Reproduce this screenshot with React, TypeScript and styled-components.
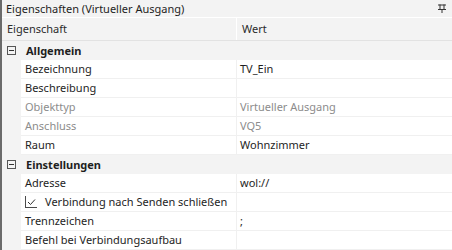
import React, { FC } from 'react';
import styled, { createGlobalStyle } from 'styled-components';

const GlobalStyle = createGlobalStyle`
  html, body {
    margin: 0;
    padding: 0;
    background: #f3f3f3;
  }
  body {
    font-family: "Noto Sans", "Open Sans", sans-serif;
    font-size: 11px;
    color: #1e1e1e;
  }
`;

const Panel = styled.div`
  width: 452px;
  height: 250px;
  overflow: hidden;
  background: #f3f3f3;
  border-left: 2px solid #6b6b6b;
  box-sizing: border-box;
  display: flex;
  flex-direction: column;
`;

const TitleBar = styled.div`
  height: 17px;
  flex: 0 0 17px;
  display: flex;
  align-items: center;
  justify-content: space-between;
  padding: 0 6px 0 4px;
  border-bottom: 1px solid #ffffff;
  line-height: 17px;
  color: #1e1e1e;
`;

const HeaderRow = styled.div`
  height: 22px;
  flex: 0 0 22px;
  display: grid;
  grid-template-columns: 234px 1fr;
  border-bottom: 1px solid #e2e2e2;
`;

const HeaderCell = styled.div<{ $first?: boolean }>`
  line-height: 22px;
  padding-left: 5px;
  border-left: ${p => (p.$first ? 'none' : '1px solid #ffffff')};
  color: #2b2b2b;
`;

const GroupRow = styled.div`
  height: 19px;
  flex: 0 0 19px;
  display: flex;
  align-items: center;
  font-weight: bold;
`;

const Expander = styled.span`
  width: 9px;
  height: 9px;
  box-sizing: border-box;
  border: 1px solid #555;
  margin: 0 10px 0 5px;
  position: relative;
  &::after {
    content: '';
    position: absolute;
    left: 1px;
    right: 1px;
    top: 3px;
    height: 1px;
    background: #333;
  }
`;

const Row = styled.div`
  height: 19px;
  flex: 0 0 19px;
  display: grid;
  grid-template-columns: 19px 215px 1fr;
`;

const Cell = styled.div<{ $disabled?: boolean; $value?: boolean }>`
  background: #ffffff;
  border-bottom: 1px solid #f0f0f0;
  border-left: ${p => (p.$value ? '1px solid #f0f0f0' : 'none')};
  box-sizing: border-box;
  line-height: 18px;
  padding-left: ${p => (p.$value ? '3px' : '4px')};
  color: ${p => (p.$disabled ? '#8c8c8c' : '#1e1e1e')};
  white-space: nowrap;
  overflow: hidden;
  display: flex;
  align-items: center;
`;

const CheckBox = styled.span`
  width: 12px;
  height: 12px;
  flex: 0 0 12px;
  box-sizing: border-box;
  border-left: 1px solid #4a4a4a;
  border-bottom: 1px solid #4a4a4a;
  margin: 0 8px 0 0;
  display: inline-flex;
  align-items: center;
  justify-content: center;
`;

const PinIcon: FC = () => (
  <svg width="8" height="10" viewBox="0 0 8 10">
    <rect x="0" y="0.5" width="8" height="1" fill="#333" />
    <rect x="1.5" y="0.5" width="1" height="5" fill="#333" />
    <rect x="5.5" y="0.5" width="1" height="5" fill="#333" />
    <rect x="0" y="5" width="8" height="1" fill="#333" />
    <rect x="3.5" y="5" width="1" height="4" fill="#333" />
  </svg>
);

interface Prop {
  name: string;
  value?: string;
  disabled?: boolean;
  check?: boolean;
}

const allgemein: Prop[] = [
  { name: 'Bezeichnung', value: 'TV_Ein' },
  { name: 'Beschreibung' },
  { name: 'Objekttyp', value: 'Virtueller Ausgang', disabled: true },
  { name: 'Anschluss', value: 'VQ5', disabled: true },
  { name: 'Raum', value: 'Wohnzimmer' },
];

const einstellungen: Prop[] = [
  { name: 'Adresse', value: 'wol://' },
  { name: 'Verbindung nach Senden schließen', check: true },
  { name: 'Trennzeichen', value: ';' },
  { name: 'Befehl bei Verbindungsaufbau' },
];

const PropRow: FC<{ p: Prop }> = ({ p }) => (
  <Row>
    <span />
    <Cell $disabled={p.disabled}>
      {p.check && (
        <CheckBox>
          <svg width="9" height="8" viewBox="0 0 9 8">
            <path d="M1 4 L3.5 6.5 L8 1.5" fill="none" stroke="#333" strokeWidth="1" />
          </svg>
        </CheckBox>
      )}
      {p.name}
    </Cell>
    <Cell $value $disabled={p.disabled}>{p.value}</Cell>
  </Row>
);

const Group: FC<{ title: string; items: Prop[] }> = ({ title, items }) => (
  <>
    <GroupRow>
      <Expander />
      {title}
    </GroupRow>
    {items.map(p => (
      <PropRow key={p.name} p={p} />
    ))}
  </>
);

const App: FC = () => (
  <>
    <GlobalStyle />
    <Panel>
      <TitleBar>
        <span>Eigenschaften (Virtueller Ausgang)</span>
        <PinIcon />
      </TitleBar>
      <HeaderRow>
        <HeaderCell $first>Eigenschaft</HeaderCell>
        <HeaderCell>Wert</HeaderCell>
      </HeaderRow>
      <Group title="Allgemein" items={allgemein} />
      <Group title="Einstellungen" items={einstellungen} />
    </Panel>
  </>
);

export default App;
